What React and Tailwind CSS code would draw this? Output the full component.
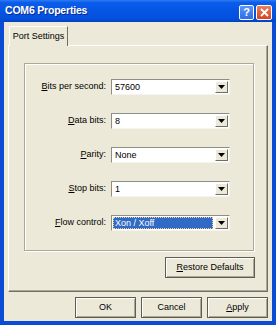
import React from "react";

const font = { fontFamily: '"Liberation Sans", Arial, sans-serif' };

function U({ children }) {
  return <span className="underline underline-offset-[1px]">{children}</span>;
}

function Combo({ value, selected }) {
  return (
    <div className="flex h-[16px] w-[119px] items-stretch border-t border-l border-t-[#8E8E86] border-l-[#8E8E86] border-b border-r border-b-[#F4F3EE] border-r-[#F4F3EE] bg-white">
      <div className="flex flex-1 items-center pl-[1px] pr-[2px]">
        {selected ? (
          <div className="flex h-[12px] w-full items-center border border-dotted border-[#F0D090] bg-[#316AC5] pl-[1px] text-white leading-none">
            {value}
          </div>
        ) : (
          <span className="pl-[2px] leading-none text-black">{value}</span>
        )}
      </div>
      <div className="my-[1px] mr-[1px] flex w-[13px] items-center justify-center border-t border-l border-t-[#FFFFFF] border-l-[#FFFFFF] border-b border-r border-b-[#6E6D66] border-r-[#6E6D66] bg-[#ECE9D8]">
        <svg width="7" height="4" viewBox="0 0 7 4">
          <path d="M0 0H7L3.5 4Z" fill="#000" />
        </svg>
      </div>
    </div>
  );
}

function Row({ label, value, selected }) {
  return (
    <div className="flex h-[16px] items-center">
      <div className="w-[81px] whitespace-nowrap text-right text-black">{label}</div>
      <div className="ml-[5px]">
        <Combo value={value} selected={selected} />
      </div>
    </div>
  );
}

function Btn({ children, w }) {
  return (
    <div
      className={`flex h-[21px] ${w} items-center justify-center whitespace-nowrap border border-[#5D5C55] bg-[#ECE9D8] shadow-[inset_1px_1px_0_#FFFFFF,inset_-1px_-1px_0_#ACA899] text-black`}
    >
      {children}
    </div>
  );
}

export default function App() {
  return (
    <div
      className="flex h-[325px] w-[276px] flex-col overflow-hidden bg-[#0A4CD6] text-[9px]"
      style={font}
    >
      {/* Title bar */}
      <div className="flex h-[22px] shrink-0 items-center bg-[linear-gradient(to_bottom,#2D7CF2_0%,#0B5CEB_12%,#0556E5_45%,#0350DB_85%,#0341C4_100%)] pl-[5px] pr-[4px]">
        <span className="text-[10.5px] font-bold tracking-[-0.2px] text-white [text-shadow:1px_1px_0_#0A2C8C]">
          COM6 Properties
        </span>
        <div className="ml-auto flex gap-[2px] pt-[2px]">
          <div className="flex h-[15px] w-[15px] items-center justify-center rounded-[2px] border border-white bg-[linear-gradient(to_bottom,#5C95F8,#2E6BE8)] text-[11px] font-bold leading-none text-white">
            ?
          </div>
          <div className="flex h-[15px] w-[16px] items-center justify-center rounded-[2px] border border-white bg-[linear-gradient(to_bottom,#EB7F5C,#D4451F)]">
            <svg width="9" height="9" viewBox="0 0 9 9">
              <path d="M1 1L8 8M8 1L1 8" stroke="#fff" strokeWidth="1.8" />
            </svg>
          </div>
        </div>
      </div>

      {/* Client area */}
      <div className="mx-[4px] mb-[4px] flex flex-1 flex-col bg-[#ECE9D8]">
        {/* Tabs */}
        <div className="flex pl-[5px] pt-[4px]">
          <div className="relative z-10 -mb-[1px] flex h-[20px] w-[59px] items-center justify-center whitespace-nowrap border-t border-l border-t-white border-l-white border-r border-r-[#716F64] bg-[#ECE9D8] text-black">
            Port Settings
          </div>
        </div>

        {/* Panel */}
        <div className="mx-[4px] flex h-[247px] flex-col border border-t-white border-l-white border-r-[#716F64] border-b-[#716F64] shadow-[inset_-1px_-1px_0_#ACA899]">
          {/* Group box */}
          <div className="ml-[15px] mt-[17px] flex h-[188px] w-[230px] flex-col gap-[18px] border border-[#ACA899] pt-[15px] shadow-[inset_1px_1px_0_#FFFFFF,1px_1px_0_#FFFFFF]">
            <Row label={<><U>B</U>its per second:</>} value="57600" />
            <Row label={<><U>D</U>ata bits:</>} value="8" />
            <Row label={<><U>P</U>arity:</>} value="None" />
            <Row label={<><U>S</U>top bits:</>} value="1" />
            <Row label={<><U>F</U>low control:</>} value="Xon / Xoff" selected />
          </div>
          <div className="mt-[6px] flex w-[246px] justify-end">
            <Btn w="w-[90px]">
              <span><U>R</U>estore Defaults</span>
            </Btn>
          </div>
        </div>

        {/* Bottom buttons */}
        <div className="mt-[5px] flex justify-end gap-[5px] pr-[4px]">
          <Btn w="w-[61px]">OK</Btn>
          <Btn w="w-[61px]">Cancel</Btn>
          <Btn w="w-[61px]">
            <span><U>A</U>pply</span>
          </Btn>
        </div>
      </div>
    </div>
  );
}
